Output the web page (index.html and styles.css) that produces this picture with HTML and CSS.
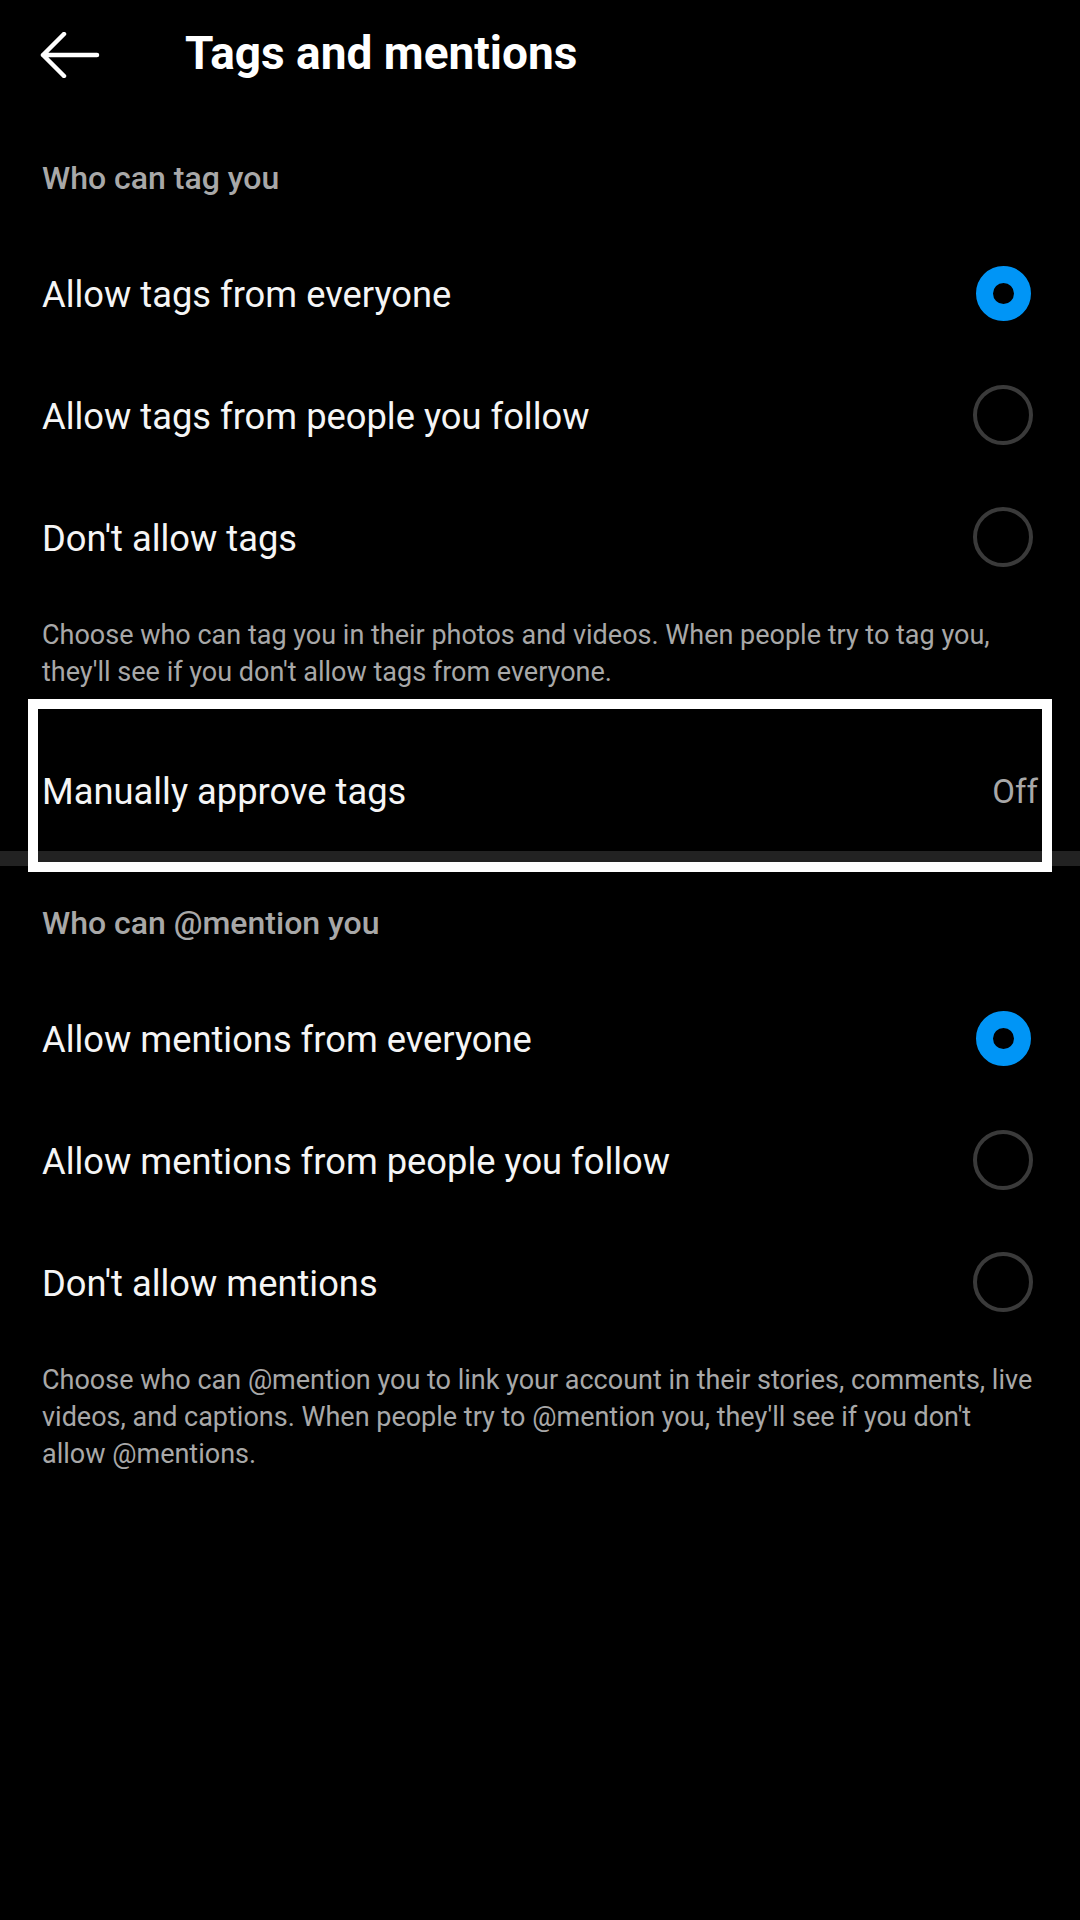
FILE: index.html
```html
<!DOCTYPE html>
<html lang="en">
<head>
  <meta charset="UTF-8">
  <meta name="viewport" content="width=device-width, initial-scale=1.0">
  <title>Tags and mentions</title>
  <link rel="stylesheet" href="styles.css">
</head>
<body>
  <header class="topbar">
    <svg class="back" width="60" height="46" viewBox="0 0 60 46" fill="none" stroke="#fff" stroke-width="4.5" stroke-linecap="round" stroke-linejoin="round">
      <path d="M57 23H3M24 2L3 23L24 44"/>
    </svg>
    <h1>Tags and mentions</h1>
  </header>

  <!-- tags -->
  <section class="group">
    <h2 class="group-label">Who can tag you</h2>
    <ul class="options">
      <li class="option"><span>Allow tags from everyone</span><i class="radio on"></i></li>
      <li class="option"><span>Allow tags from people you follow</span><i class="radio"></i></li>
      <li class="option"><span>Don't allow tags</span><i class="radio"></i></li>
    </ul>
    <p class="note">Choose who can tag you in their photos and videos. When people try to tag you, they'll see if you don't allow tags from everyone.</p>
  </section>

  <div class="link-row">
    <span>Manually approve tags</span>
    <span class="value">Off</span>
    <div class="highlight"></div>
  </div>
  <div class="divider"></div>

  <!-- mentions -->
  <section class="group">
    <h2 class="group-label">Who can @mention you</h2>
    <ul class="options">
      <li class="option"><span>Allow mentions from everyone</span><i class="radio on"></i></li>
      <li class="option"><span>Allow mentions from people you follow</span><i class="radio"></i></li>
      <li class="option"><span>Don't allow mentions</span><i class="radio"></i></li>
    </ul>
    <p class="note">Choose who can @mention you to link your account in their stories, comments, live videos, and captions. When people try to @mention you, they'll see if you don't allow @mentions.</p>
  </section>
</body>
</html>
```

FILE: styles.css
```css
body {
  margin: 0;
  background: #000;
  color: #f5f5f5;
  font-family: Roboto, "Noto Sans", sans-serif;
}

.topbar {
  height: 106px;
  margin-bottom: 15px;
  display: flex;
  align-items: center;
  padding-left: 40px;
}

.topbar .back {
  flex: none;
  margin-top: 4px;
}

.topbar h1 {
  margin: 0 0 0 85px;
  font-size: 46px;
  font-weight: 700;
  color: #fff;
  line-height: 1;
}

.group-label {
  margin: 0;
  padding: 39px 42px 36px;
  font-size: 32px;
  line-height: 36px;
  font-weight: 500;
  color: #a8a8a8;
}

.options {
  list-style: none;
  margin: 0;
  padding: 0;
}

.option {
  height: 122px;
  display: flex;
  align-items: center;
  justify-content: space-between;
  padding: 0 47px 0 42px;
  font-size: 36.3px;
}

.option span {
  padding-top: 3px;
}

.radio {
  box-sizing: border-box;
  width: 60px;
  height: 60px;
  border: 4px solid #3a3a3a;
  border-radius: 50%;
}

.radio.on {
  width: 55px;
  height: 55px;
  margin: 0 2.5px;
  border: 17.5px solid #0095f6;
}

.note {
  margin: 0;
  padding: 19px 42px 37px;
  font-size: 27px;
  line-height: 37px;
  color: #a8a8a8;
}

.link-row {
  position: relative;
  height: 123px;
  display: flex;
  align-items: center;
  justify-content: space-between;
  padding: 3px 42px 0;
  box-sizing: border-box;
  font-size: 36.3px;
}

.link-row .value {
  color: #a8a8a8;
  font-size: 33px;
}

/* annotation frame drawn over the row */
.highlight {
  position: absolute;
  top: -29px;
  bottom: -21px;
  left: 28px;
  right: 28px;
  border: 10px solid #fff;
  z-index: 2;
}

.divider {
  height: 15px;
  background: #222;
}
```
